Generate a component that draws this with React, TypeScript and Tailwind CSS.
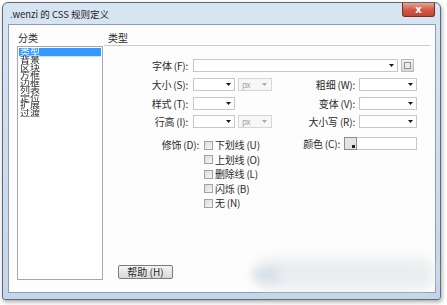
import React from "react";

const Arrow = ({ gray }: { gray?: boolean }) => (
  <svg width="5" height="3" viewBox="0 0 5 3" className="shrink-0">
    <polygon points="0,0 5,0 2.5,3" fill={gray ? "#a8a8a8" : "#1a1a1a"} />
  </svg>
);

const Sel = ({ cls }: { cls: string }) => (
  <div className={`h-[13px] ${cls} shrink-0 border border-[#c4c8cc] bg-white flex items-center justify-end pr-[3px]`}>
    <Arrow />
  </div>
);

const Unit = () => (
  <div className="h-[13px] w-[34px] ml-[3px] shrink-0 border border-[#d4d6d8] bg-[#f7f7f7] flex items-center justify-between pl-[3px] pr-[4px] text-[8px] leading-[11px] text-[#a0a0a0]">
    <span>px</span>
    <Arrow gray />
  </div>
);

const Check = ({ label }: { label: string }) => (
  <div className="h-[14.5px] flex items-center">
    <div className="w-[9px] h-[9px] border border-[#9ea3a8] bg-gradient-to-br from-[#dcdcdc] to-[#f6f6f6] shrink-0" />
    <span className="ml-[2px] text-[10px] leading-[12px] text-[#2a2a2a] tracking-[-0.2px]">{label}</span>
  </div>
);

const items = ["类型", "背景", "区块", "方框", "边框", "列表", "定位", "扩展", "过渡"];

export default function App() {
  return (
    <div className="w-[447px] h-[305px] bg-white relative overflow-hidden font-['Noto_Sans_CJK_SC',sans-serif] text-[#2a2a2a]">
      <div className="absolute left-[2px] top-[2px] w-[439px] h-[298px] rounded-t-[6px] rounded-b-[3px] border border-[#5d6b7a] bg-gradient-to-b from-[#d7e5f3] to-[#c4d6ea] shadow-[1px_2px_4px_rgba(0,0,0,0.35)] flex flex-col">
        {/* title bar */}
        <div className="h-[21px] flex items-start justify-between pl-[7px] pr-[5px] shrink-0">
          <div className="self-center text-[9.5px] leading-[12px] text-[#1e1e1e]">.wenzi 的 CSS 规则定义</div>
          <div className="w-[33px] h-[14px] rounded-b-[3px] border border-[#7b2c22] border-t-0 bg-gradient-to-b from-[#e8a293] via-[#d25c48] to-[#c14630] flex items-center justify-center">
            <span className="text-white text-[10px] leading-[10px] font-bold font-['DejaVu_Sans',sans-serif]">x</span>
          </div>
        </div>
        {/* client */}
        <div className="flex-1 ml-[5px] mr-[4px] mb-[6px] border border-[#8d9db0] bg-[#fdfdfd] flex">
          {/* left column */}
          <div className="pl-[8px] pt-[7px] flex flex-col shrink-0">
            <div className="pl-[1px] text-[10px] leading-[12px]">分类</div>
            <div className="mt-[2px] w-[86px] h-[234px] border border-[#a5a9ae] bg-white pt-[1px] px-[1px] overflow-hidden">
              <div className="origin-top scale-y-75 text-[10px] leading-[10px]">
                {items.map((t, i) => (
                  <div key={t} className={i === 0 ? "bg-[#3399ff] text-white h-[10.5px] pl-[1px]" : "h-[10px] pl-[1px]"}>
                    {t}
                  </div>
                ))}
              </div>
            </div>
          </div>
          {/* right column */}
          <div className="flex-1 ml-[1px] mr-[5px] pt-[7px] flex flex-col">
            <div className="pl-[4px] text-[10px] leading-[12px] pb-[1px] border-b border-[#c9cdd2]">类型</div>
            {/* row 1 */}
            <div className="mt-[13px] flex items-center text-[10px] leading-[12px] tracking-[-0.2px]">
              <div className="w-[86px] text-right pr-[2px]">字体 (F):</div>
              <div className="ml-[3px] w-[205px] h-[13px] border border-[#c4c8cc] bg-white flex items-center justify-end pr-[3px]">
                <Arrow />
              </div>
              <div className="ml-[3px] w-[13px] h-[13px] border border-[#b8bcc0] bg-gradient-to-b from-[#f2f2f2] to-[#d8d8d8] flex items-center justify-center">
                <div className="w-[7px] h-[7px] border border-[#8a9096] bg-[#e8ecef]" />
              </div>
            </div>
            {/* row 2 */}
            <div className="mt-[6px] flex items-center text-[10px] leading-[12px] tracking-[-0.2px]">
              <div className="w-[86px] text-right pr-[2px]">大小 (S):</div>
              <div className="ml-[3px] flex">
                <Sel cls="w-[42px]" />
                <Unit />
              </div>
              <div className="w-[85px] text-right pr-[2px]">粗细 (W):</div>
              <div className="ml-[2px]"><Sel cls="w-[58px]" /></div>
            </div>
            {/* row 3 */}
            <div className="mt-[6px] flex items-center text-[10px] leading-[12px] tracking-[-0.2px]">
              <div className="w-[86px] text-right pr-[2px]">样式 (T):</div>
              <div className="ml-[3px] flex">
                <Sel cls="w-[42px]" />
                <div className="w-[37px]" />
              </div>
              <div className="w-[85px] text-right pr-[2px]">变体 (V):</div>
              <div className="ml-[2px]"><Sel cls="w-[58px]" /></div>
            </div>
            {/* row 4 */}
            <div className="mt-[5px] flex items-center text-[10px] leading-[12px] tracking-[-0.2px]">
              <div className="w-[86px] text-right pr-[2px]">行高 (I):</div>
              <div className="ml-[3px] flex">
                <Sel cls="w-[42px]" />
                <Unit />
              </div>
              <div className="w-[85px] text-right pr-[2px]">大小写 (R):</div>
              <div className="ml-[2px]"><Sel cls="w-[58px]" /></div>
            </div>
            {/* row 5 */}
            <div className="mt-[9px] flex items-start text-[10px] leading-[12px] tracking-[-0.2px]">
              <div className="w-[168px] flex pt-[1px]">
                <div className="w-[96px] h-[14.5px] flex items-center justify-end pr-[1px]">修饰 (D):</div>
                <div className="ml-[4px] flex flex-col">
                  <Check label="下划线 (U)" />
                  <Check label="上划线 (O)" />
                  <Check label="删除线 (L)" />
                  <Check label="闪烁 (B)" />
                  <Check label="无 (N)" />
                </div>
              </div>
              <div className="flex items-center">
                <div className="w-[70px] h-[13px] flex items-center justify-end pr-[2px]">颜色 (C):</div>
                <div className="ml-[2px] w-[13px] h-[13px] border border-[#8c8c8c] bg-[#e4e4e4] flex items-end justify-end p-[1px]">
                  <div className="w-[3px] h-[3px] bg-[#222]" />
                </div>
                <div className="w-[60px] h-[13px] border border-[#c4c8cc] border-l-0 bg-white" />
              </div>
            </div>
            <div className="flex-1" />
            <div className="ml-[14px] mb-[13px] w-[55px] h-[14px] rounded-[2px] border border-[#7a7a7a] bg-gradient-to-b from-[#f4f4f4] to-[#d9d9d9] flex items-center justify-center text-[10px] leading-[12px]">
              帮助 (H)
            </div>
          </div>
        </div>
      </div>
      {/* watermark blur */}
      <div className="absolute left-[255px] top-[258px] w-[180px] h-[32px] rounded-full bg-[#dfe2e6]/60 blur-[6px]" />
      <div className="absolute left-[252px] top-[268px] w-[28px] h-[14px] rounded-full bg-[#c8d9e6]/60 blur-[4px]" />
    </div>
  );
}
